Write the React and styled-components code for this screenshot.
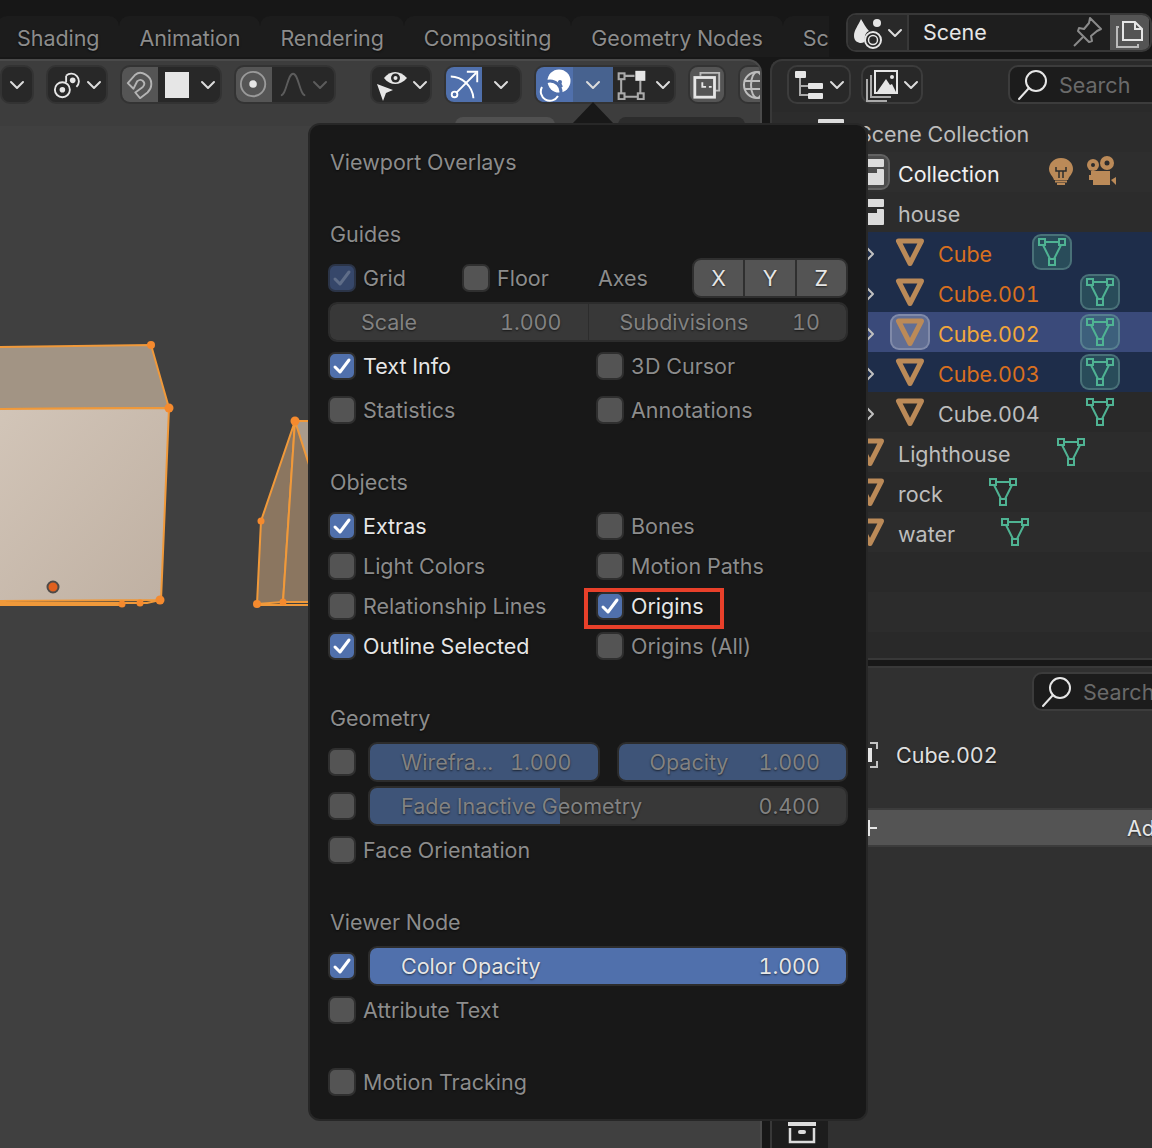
import React from "react";
import styled, { createGlobalStyle, css } from "styled-components";

const Global = createGlobalStyle`
  html, body { margin: 0; padding: 0; background: #171717; }
  * { box-sizing: border-box; }
`;

const Page = styled.div`
  position: relative;
  width: 1152px;
  height: 1148px;
  overflow: hidden;
  background: #171717;
  font-family: Inter, "Noto Sans", sans-serif;
  font-size: 21.5px;
  font-variant-numeric: tabular-nums;
  line-height: 26px;
  color: #e6e6e6;
  display: flex;
  flex-direction: column;
`;

/* ---------- top bar ---------- */
const TopBar = styled.header`
  height: 59px;
  flex: none;
  display: flex;
  overflow: hidden;
`;
const Tabs = styled.nav`
  width: 829px;
  flex: none;
  display: flex;
  padding: 16px 0 2px;
  overflow: hidden;
`;
const Tab = styled.div`
  flex: none;
  padding: 9px 20px 0;
  margin-left: ${(p) => p.$first ? "-3px" : "0"};
  background: #1c1c1c;
  border-radius: 10px 10px 0 0;
  color: #8c8c8c;
  letter-spacing: -0.06px;
  text-shadow: 0 1px 2px rgba(0,0,0,.6);
`;
const SceneSelect = styled.div`
  margin: 13px 0 7px 17px;
  width: 320px;
  display: flex;
  border: 2px solid #383838;
  border-radius: 10px;
  background: #1e1e1e;
  overflow: hidden;
`;
const SceneIcon = styled.div`
  width: 61px;
  background: #292929;
  border-right: 2px solid #383838;
  display: flex;
  align-items: center;
  justify-content: center;
  gap: 0;
`;
const SceneName = styled.div`
  width: 201px;
  padding: 0 6px 1px 14px;
  display: flex;
  align-items: center;
  justify-content: space-between;
`;
const SceneCopy = styled.div`
  width: 39px;
  background: #545454;
  display: flex;
  align-items: center;
  justify-content: center;
`;

/* ---------- body ---------- */
const Body = styled.div`
  flex: 1;
  min-height: 0;
  display: flex;
  gap: 8px;
`;
const Viewport = styled.section`
  width: 762px;
  flex: none;
  display: flex;
  flex-direction: column;
  background: #3d3d3d;
  border-top: 2px solid #4a4a4a;
  border-right: 2px solid #4a4a4a;
  border-radius: 0 14px 0 0;
  overflow: hidden;
`;
const Toolbar = styled.div`
  flex: none;
  height: 53px;
  display: flex;
  gap: 12px;
  padding-top: 4px;
  align-items: flex-start;
`;
const ToolGroup = styled.div`
  flex: none;
  height: 39px;
  display: flex;
  background: #282828;
  border: 2px solid #333;
  border-radius: 10px;
  overflow: hidden;
  margin-left: ${(p) => p.$before || 0}px;
`;
const toneColors = { active: "#5070ac", dim: "#47628f", grey: "#555555", none: "transparent" };
const Seg = styled.div`
  flex: none;
  width: ${(p) => p.$w}px;
  height: 100%;
  display: flex;
  align-items: center;
  justify-content: center;
  gap: ${(p) => p.$gap ?? 3}px;
  padding-left: ${(p) => p.$pl || 0}px;
  background: ${(p) => toneColors[p.$tone || "none"]};
`;
const ToolStrip = styled.div`
  flex: none;
  height: 12px;
  display: flex;
  align-items: flex-start;
  padding: 3px 0 0 455px;
`;
const Sliver = styled.div`
  width: ${(p) => p.$w}px;
  height: 9px;
  margin-right: ${(p) => p.$mr || 0}px;
  border-radius: 8px 8px 0 0;
  background: ${(p) => p.$bg};
`;
const Canvas = styled.div`
  flex: 1;
  min-height: 0;
  background: #404040;
  svg { display: block; }
`;

/* ---------- right side ---------- */
const Side = styled.aside`
  flex: 1;
  min-width: 0;
  display: flex;
  flex-direction: column;
`;
const Outliner = styled.section`
  height: 599px;
  flex: none;
  background: #2a2a2a;
  border-radius: 12px 0 0 0;
  border-top: 2px solid #383838;
  border-left: 2px solid #383838;
  display: flex;
  flex-direction: column;
  overflow: hidden;
`;
const OutlinerHead = styled.div`
  flex: none;
  height: 51px;
  display: flex;
  align-items: flex-start;
  gap: 10px;
  padding: 4px 0 0 15px;
`;
const HeadButton = styled.div`
  flex: none;
  width: ${(p) => p.$w}px;
  height: 39px;
  border: 2px solid #3c3c3c;
  border-radius: 10px;
  background: #282828;
  display: flex;
  align-items: center;
  justify-content: center;
  gap: 3px;
`;
const SearchBox = styled.div`
  flex: none;
  width: ${(p) => p.$w}px;
  height: 39px;
  margin-left: ${(p) => p.$before || 0}px;
  border: 2px solid #3c3c3c;
  border-radius: 10px;
  background: #1c1c1c;
  color: #6a6a6a;
  display: flex;
  align-items: center;
  gap: 10px;
  padding-left: 7px;
  overflow: hidden;
`;
const Rows = styled.div`
  flex: 1;
  min-height: 0;
  overflow: hidden;
`;
const rowBg = { selected: "#1e2d4a", active: "#3a4a7a", current: "#2e2e2e" };
const Row = styled.div`
  height: 40px;
  display: flex;
  align-items: center;
  padding-left: ${(p) => p.$indent}px;
  background: ${(p) => rowBg[p.$state] || (p.$odd ? "#2c2c2c" : "#292929")};
`;
const Chevron = styled.div`
  flex: none;
  width: 40px;
  height: 40px;
  padding-top: 4px;
  display: flex;
  align-items: center;
  justify-content: center;
`;
const IconBox = styled.div`
  flex: none;
  width: 40px;
  height: 36px;
  display: flex;
  align-items: center;
  justify-content: center;
  border-radius: 9px;
  border: 2px solid transparent;
  margin-left: ${(p) => p.$before || 0}px;
  ${(p) => p.$box === "object" && css`
    background: rgba(255,255,255,.2);
    border-color: rgba(255,255,255,.2);
  `}
  ${(p) => p.$box === "mesh" && css`
    background: rgba(70,150,130,.3);
    border-color: rgba(150,200,190,.3);
  `}
  ${(p) => p.$box === "collection" && css`
    background: #4c4c4c;
    border-color: #626262;
  `}
`;
const nameColors = { selected: "#d9701f", active: "#f2a73c", current: "#f0f0f0" };
const RowName = styled.span`
  margin-left: 8px;
  padding-top: 4px;
  color: ${(p) => nameColors[p.$state] || "#bdbdbd"};
  white-space: nowrap;
`;
const Divider = styled.div`
  flex: none;
  height: 10px;
  background: #171717;
  border-top: 2px solid #383838;
  border-bottom: 2px solid #383838;
`;
const Props = styled.section`
  flex: 1;
  min-height: 0;
  display: flex;
  background: #303030;
  border-left: 2px solid #383838;
`;
const PropTabs = styled.div`
  flex: none;
  width: 56px;
  background: #1d1d1d;
  display: flex;
  flex-direction: column;
  justify-content: flex-end;
  align-items: center;
  padding: 0 0 4px 4px;
`;
const PropMain = styled.div`
  flex: 1;
  min-width: 0;
  display: flex;
  flex-direction: column;
  overflow: hidden;
`;
const PropSearchRow = styled.div`
  flex: none;
  padding: 4px 0 0 204px;
  display: flex;
`;
const PropObject = styled.div`
  flex: none;
  height: 40px;
  margin-top: 24px;
  padding-left: 22px;
  display: flex;
  align-items: center;
  gap: 18px;
  color: #e0e0e0;
  text-shadow: 0 1px 2px rgba(0,0,0,.6);
`;
const AddButton = styled.div`
  flex: none;
  margin: 33px 0 0 10px;
  width: 700px;
  height: 39px;
  background: #545454;
  border: 2px solid #3c3c3c;
  border-radius: 8px;
  display: flex;
  align-items: center;
  padding-left: 20px;
  gap: 249px;
  text-shadow: 0 1px 2px rgba(0,0,0,.6);
`;

/* ---------- popover ---------- */
const Popover = styled.div`
  position: absolute;
  left: 308px;
  top: 123px;
  width: 560px;
  height: 998px;
  padding: 17px 18px 0;
  background: #181818;
  border: 2px solid #272727;
  border-radius: 12px;
  display: flex;
  flex-direction: column;
  gap: 32px;
  &::before {
    content: "";
    position: absolute;
    left: 263px;
    top: -23px;
    width: 0;
    height: 0;
    border-left: 20px solid transparent;
    border-right: 20px solid transparent;
    border-bottom: 21px solid #181818;
  }
`;
const Section = styled.div`
  display: flex;
  flex-direction: column;
  gap: ${(p) => p.$gap ?? 4}px;
`;
const Heading = styled.div`
  height: 40px;
  display: flex;
  align-items: center;
  padding-left: 2px;
  color: #8c8c8c;
  text-shadow: 0 1px 2px rgba(0,0,0,.6);
`;
const TwoCols = styled.div`
  display: grid;
  grid-template-columns: 268px 1fr;
  column-gap: 0;
  row-gap: ${(p) => p.$gap ?? 4}px;
`;
const GridRow = styled.div`
  display: grid;
  grid-template-columns: 134px 134px 96px 1fr;
  align-items: center;
`;
const CheckRow = styled.div`
  position: relative;
  height: 40px;
  display: flex;
  align-items: center;
  gap: 7px;
`;
const Box = styled.div`
  flex: none;
  width: 28px;
  height: 28px;
  border: 2px solid ${(p) => p.$disabled ? "#2b3447" : "#2f2f2f"};
  border-radius: 7px;
  background: ${(p) => p.$disabled ? "#36476a" : p.$on ? "#5070ac" : "#545454"};
  display: flex;
  align-items: center;
  justify-content: center;
`;
const CheckLabel = styled.span`
  color: ${(p) => p.$on ? "#e6e6e6" : "#8c8c8c"};
  text-shadow: 0 1px 2px rgba(0,0,0,.6);
  white-space: nowrap;
`;
const Callout = styled.div`
  position: absolute;
  left: -12px;
  top: 2px;
  width: 140px;
  height: 41px;
  border: 4px solid #e8402a;
  pointer-events: none;
`;
const AxisLabel = styled.span`
  padding-left: 2px;
  color: #8c8c8c;
  text-shadow: 0 1px 2px rgba(0,0,0,.6);
`;
const AxisGroup = styled.div`
  height: 40px;
  display: flex;
  border: 2px solid #2f2f2f;
  border-radius: 9px;
  overflow: hidden;
  gap: 2px;
  background: #2f2f2f;
`;
const AxisBtn = styled.div`
  flex: 1;
  background: #545454;
  display: flex;
  align-items: center;
  justify-content: center;
  color: #e6e6e6;
  text-shadow: 0 1px 2px rgba(0,0,0,.6);
`;
const FieldPair = styled.div`
  display: flex;
  height: 40px;
  border: 2px solid #2c2c2c;
  border-radius: 9px;
  overflow: hidden;
`;
const Field = styled.div`
  flex: 1;
  min-width: 0;
  height: ${(p) => p.$alone ? "40px" : "100%"};
  display: flex;
  align-items: center;
  justify-content: space-between;
  padding: 0 26px 0 31px;
  border-left: ${(p) => p.$joined ? "1px solid #2c2c2c" : "none"};
  color: ${(p) => p.$on ? "#e6e6e6" : "#828282"};
  text-shadow: 0 1px 2px rgba(0,0,0,.6);
  white-space: nowrap;
  background: linear-gradient(
    to right,
    ${(p) => p.$color || "#383838"} ${(p) => p.$fill ?? 0}%,
    #383838 ${(p) => p.$fill ?? 0}%
  );
  ${(p) => p.$alone && css`
    border: 2px solid #2c2c2c;
    border-radius: 9px;
  `}
`;
const SliderRow = styled.div`
  display: flex;
  align-items: center;
  gap: 12px;
`;
const SliderPair = styled.div`
  flex: 1;
  min-width: 0;
  display: flex;
  gap: 17px;
`;

/* ---------- icons ---------- */
const Ico = ({ s = 32, vb = 32, children, ...rest }) => (
  <svg width={s} height={s} viewBox={`0 0 ${vb} ${vb}`} fill="none" aria-hidden="true" {...rest}>{children}</svg>
);
const Down = ({ c = "#dcdcdc" }) => (
  <Ico s={16} vb={16}><path d="M2 5l6 6 6-6" stroke={c} strokeWidth="2" strokeLinecap="round" strokeLinejoin="round" /></Ico>
);
const Right = () => (
  <Ico s={16} vb={16}><path d="M5 2l6 6-6 6" stroke="#c0c0c0" strokeWidth="2" strokeLinecap="round" strokeLinejoin="round" /></Ico>
);
const PivotIcon = () => (
  <Ico s={30}><g stroke="#e6e6e6" strokeWidth="2"><circle cx="10" cy="21" r="8" /><path d="M14 6a8 8 0 1 1 11 12" /><path d="M14 13c0-3 0-5 0-7" /></g><circle cx="10" cy="21" r="3" fill="#e6e6e6" /><circle cx="21" cy="11" r="3" fill="#e6e6e6" /></Ico>
);
const MagnetIcon = () => (
  <Ico s={30}><path d="M3 14 L11 5 C17 0 29 6 28 16 C28 20 26 22 24 24 L16 30 L11 24 L19 18 C23 14 18 8 13 12 L9 20 Z" stroke="#b4b4b4" strokeWidth="2" strokeLinejoin="round" /></Ico>
);
const Swatch = styled.div`
  width: 24px;
  height: 26px;
  background: #e6e6e6;
`;
const ProportionalIcon = () => (
  <Ico s={30}><circle cx="15" cy="15" r="13" stroke="#9a9a9a" strokeWidth="2" /><circle cx="15" cy="15" r="4" fill="#e6e6e6" /></Ico>
);
const FalloffIcon = () => (
  <Ico s={30}><path d="M2 27C8 27 9 4 15 4s7 23 13 23" stroke="#5c5c5c" strokeWidth="2" /></Ico>
);
const EyeArrowIcon = () => (
  <Ico s={34} vb={34}><path d="M9 10C15 2 25 2 32 10 25 18 15 18 9 10Z" fill="#e6e6e6" /><circle cx="20.500" cy="10" r="4.500" fill="#282828" /><circle cx="20.500" cy="10" r="2" fill="#e6e6e6" /><path d="M2 16l16 6-7 3-3 8Z" fill="#e6e6e6" /></Ico>
);
const TransformIcon = () => (
  <Ico s={34} vb={36}><g stroke="#fff" strokeWidth="2"><path d="M4 9C16 9 27 19 28 32" /><path d="M10 26 31 5" /><path d="M21 4H32V15" /><circle cx="8" cy="28" r="3" /></g></Ico>
);
const OverlayIcon = () => (
  <Ico s={36} vb={36}><circle cx="22" cy="14" r="11.500" fill="#fff" /><circle cx="13" cy="25" r="11" stroke="#5070ac" strokeWidth="3" /><path d="M5 20a9 9 0 1 0 16 9" stroke="#fff" strokeWidth="2" /><path d="M22 14l3 6" stroke="#5070ac" strokeWidth="2" /><circle cx="23" cy="15" r="2" fill="#5070ac" /></Ico>
);
const MeshSelectIcon = () => (
  <Ico s={30} vb={36}><g stroke="#aaa" strokeWidth="2.500"><rect x="2" y="4" width="7" height="7" /><rect x="2" y="28" width="7" height="7" /><rect x="25" y="28" width="7" height="7" /><path d="M9 7H21M5 11V28M9 32H25M28 13V28" /></g><rect x="22" y="1" width="12" height="12" fill="#e6e6e6" /></Ico>
);
const XrayIcon = () => (
  <Ico s={30} vb={32}><path d="M9 6V3H29V22H25" stroke="#bbb" strokeWidth="2" /><rect x="3" y="8" width="21" height="21" stroke="#e6e6e6" strokeWidth="3" /><path d="M11 13v5h4M18 18h3" stroke="#e6e6e6" strokeWidth="2" /></Ico>
);
const GlobeIcon = () => (
  <Ico s={32} vb={32}><g stroke="#bdbdbd" strokeWidth="2"><circle cx="16" cy="16" r="13" /><ellipse cx="16" cy="16" rx="6" ry="13" /><path d="M3 12H29M3 20H29" /></g></Ico>
);
const TreeIcon = () => (
  <Ico s={32} vb={32}><path d="M6 8V26H14M6 17H14" stroke="#aaa" strokeWidth="2" /><rect x="1" y="2" width="11" height="7" rx="1" fill="#e6e6e6" /><rect x="14" y="14" width="15" height="6" rx="1" fill="#e6e6e6" /><rect x="14" y="24" width="15" height="6" rx="1" fill="#e6e6e6" /></Ico>
);
const ImagesIcon = () => (
  <Ico s={34} vb={34}><path d="M9 3v22h22V3Z" stroke="#e6e6e6" strokeWidth="2" /><path d="M5 7v22h20M1 11v22h20" stroke="#aaa" strokeWidth="2" /><path d="M11 24l9-13 4 6 2-1 4 8Z" fill="#e6e6e6" /><circle cx="26" cy="9" r="2" fill="#e6e6e6" /></Ico>
);
const SearchIcon = ({ c = "#e6e6e6" }) => (
  <Ico s={32} vb={32}><circle cx="19" cy="12" r="10" stroke={c} strokeWidth="2" /><path d="M12 19 2 30" stroke={c} strokeWidth="2" strokeLinecap="round" /></Ico>
);
const SceneDropIcon = () => (
  <Ico s={34} vb={34}><path d="M8 3C5 10 1 14 1 20c0 5 4 7 7 7 2 0 3-1 4-2-1-5 1-9 4-10C13 12 11 8 8 3Z" fill="#e6e6e6" /><circle cx="24" cy="7" r="4" fill="#e6e6e6" /><circle cx="20" cy="24" r="8" stroke="#e6e6e6" strokeWidth="2" /><circle cx="20" cy="24" r="4.500" stroke="#e6e6e6" strokeWidth="1.500" /></Ico>
);
const PinIcon = () => (
  <Ico s={32} vb={32}><path d="M18 2 29 13l-4 2-6 5 1 5-3 1-11-11 1-3 5 1 5-6Z" stroke="#8a8a8a" strokeWidth="2" strokeLinejoin="round" /><path d="M11 21 2 30" stroke="#8a8a8a" strokeWidth="2" /></Ico>
);
const CopyIcon = () => (
  <Ico s={32} vb={32}><path d="M9 5H21L28 12V23H9Z" stroke="#e6e6e6" strokeWidth="2" /><path d="M21 5V12H28" stroke="#e6e6e6" strokeWidth="2" /><path d="M5 10H3V30H24V27" stroke="#bbb" strokeWidth="2" /></Ico>
);
const CollectionIcon = ({ notch = "#2a2a2a" }) => (
  <Ico s={28} vb={28}><rect x="2" y="1" width="26" height="8" rx="1" fill="#dcdcdc" /><rect x="4" y="11" width="24" height="16" rx="1" fill="#dcdcdc" /><rect x="4" y="11" width="17" height="4" fill={notch} /></Ico>
);
const ObjectIcon = () => (
  <Ico s={30} vb={30}><path d="M3.500 4H26.500L15 26.500Z" stroke="#bb8a58" strokeWidth="5" strokeLinejoin="round" /></Ico>
);
const MeshIcon = () => (
  <Ico s={28} vb={28}><g stroke="#4fb393" strokeWidth="2"><rect x="1" y="1" width="6" height="6" /><rect x="21" y="1" width="6" height="6" /><rect x="11" y="21" width="6" height="6" /><path d="M7 4H21M5 7 12 21M23 7 16 21" /></g></Ico>
);
const BulbIcon = () => (
  <Ico s={28} vb={28}><path d="M14 0C6 0 2 6 2 11c0 5 4 7 5 11h14c1-4 5-6 5-11 0-5-4-11-12-11Z" fill="#bb8a58" /><path d="M9 9v4h10V9M12 13v7M16 13v7" stroke="#2c2c2c" strokeWidth="1.500" /><path d="M8 23.500H20M10 26H18" stroke="#bb8a58" strokeWidth="2" /></Ico>
);
const CameraIcon = () => (
  <Ico s={32} vb={32}><circle cx="8" cy="9" r="6" fill="#bb8a58" /><circle cx="22" cy="7" r="7" fill="#bb8a58" /><circle cx="8" cy="9" r="2" fill="#2c2c2c" /><circle cx="22" cy="7" r="2.500" fill="#2c2c2c" /><path d="M6 15H25V29H8V24H4V19H6Z" fill="#bb8a58" /><path d="M26 24l5-3v8Z" fill="#bb8a58" /></Ico>
);
const ObjectDataIcon = () => (
  <Ico s={28} vb={28}><path d="M20 2h7v6M27 20v6h-7" stroke="#c4c4c4" strokeWidth="2" /><rect x="4" y="7" width="18" height="14" fill="#e6e6e6" /></Ico>
);
const PlusIcon = () => (
  <Ico s={18} vb={18}><path d="M9 1V17M1 9H17" stroke="#e6e6e6" strokeWidth="2" /></Ico>
);
const ArchiveIcon = () => (
  <Ico s={30} vb={30}><path d="M1 10H29" stroke="#dcdcdc" strokeWidth="4" /><path d="M3 14V28H27V14" stroke="#dcdcdc" strokeWidth="2.500" /><rect x="11" y="16" width="8" height="4" rx="2" fill="#dcdcdc" /></Ico>
);
const Tick = ({ dim }) => (
  <Ico s={20} vb={20}><path d="M3 11l5 5L17 4" stroke={dim ? "#5f6d88" : "#fff"} strokeWidth="3" strokeLinecap="round" strokeLinejoin="round" /></Ico>
);

const Scene = () => (
  <svg width="760" height="1022" viewBox="0 126 760 1022" aria-hidden="true">
    <defs>
      <linearGradient id="front" x1="0" y1="0" x2="1" y2="1">
        <stop offset="0" stopColor="#d2c5b8" />
        <stop offset="1" stopColor="#bfb0a2" />
      </linearGradient>
    </defs>
    <polygon points="-2,347 151,345 169,408 -2,409" fill="#a29484" stroke="#f0993a" strokeWidth="2" />
    <polygon points="-2,409 169,408 161,600 -2,601" fill="url(#front)" stroke="#f0993a" strokeWidth="2" />
    <path d="M0 603H147L160 600M0 605H122" stroke="#f0993a" strokeWidth="2" fill="none" />
    <g fill="#f58a2e">
      <circle cx="151" cy="345" r="4" />
      <circle cx="169" cy="408" r="4.500" />
      <circle cx="160" cy="600" r="4.500" />
      <circle cx="122" cy="604" r="3.500" />
      <circle cx="140" cy="603" r="3.500" />
    </g>
    <circle cx="53" cy="587" r="5.500" fill="#e0601f" stroke="#4e4a48" strokeWidth="2" />
    <polygon points="295,421 310,421 310,470" fill="#a89b8d" />
    <polygon points="295,421 261,521 257,604 283,602" fill="#8b7660" stroke="#f0993a" strokeWidth="2" />
    <polygon points="295,421 310,468 310,602 283,602" fill="#8b7660" stroke="#f0993a" strokeWidth="2" />
    <path d="M295 421H310" stroke="#f0993a" strokeWidth="2" />
    <path d="M257 605H310" stroke="#f0993a" strokeWidth="2" />
    <g fill="#f58a2e">
      <circle cx="295" cy="421" r="4.500" />
      <circle cx="261" cy="521" r="3.500" />
      <circle cx="257" cy="604" r="4" />
      <circle cx="283" cy="602" r="3.500" />
    </g>
  </svg>
);

const tabs = ["Shading", "Animation", "Rendering", "Compositing", "Geometry Nodes", "Sc"];

const objectRows = [
  { name: "Cube", state: "selected", box: true },
  { name: "Cube.001", state: "selected", box: true },
  { name: "Cube.002", state: "active", box: true },
  { name: "Cube.003", state: "selected", box: true },
  { name: "Cube.004" },
];
const plainRows = ["Lighthouse", "rock", "water"];

const Check = ({ label, on, disabled, children }) => (
  <CheckRow>
    <Box $on={on} $disabled={disabled}>{(on || disabled) && <Tick dim={disabled} />}</Box>
    {label && <CheckLabel $on={on}>{label}</CheckLabel>}
    {children}
  </CheckRow>
);

export default function App() {
  return (
    <Page>
      <Global />
      <TopBar>
        <Tabs>
          {tabs.map((t, i) => <Tab key={t} $first={i === 0}>{t}</Tab>)}
        </Tabs>
        <SceneSelect>
          <SceneIcon><SceneDropIcon /><Down /></SceneIcon>
          <SceneName>Scene<PinIcon /></SceneName>
          <SceneCopy><CopyIcon /></SceneCopy>
        </SceneSelect>
      </TopBar>

      <Body>
        <Viewport>
          <Toolbar>
            <ToolGroup><Seg $w={30}><Down /></Seg></ToolGroup>
            <ToolGroup><Seg $w={58}><PivotIcon /><Down /></Seg></ToolGroup>
            <ToolGroup>
              <Seg $w={36} $tone="grey"><MagnetIcon /></Seg>
              <Seg $w={62} $gap={11} $pl={3}><Swatch /><Down /></Seg>
            </ToolGroup>
            <ToolGroup>
              <Seg $w={36} $tone="grey"><ProportionalIcon /></Seg>
              <Seg $w={62}><FalloffIcon /><Down c="#5c5c5c" /></Seg>
            </ToolGroup>
            <ToolGroup $before={22}><Seg $w={58}><EyeArrowIcon /><Down /></Seg></ToolGroup>
            <ToolGroup>
              <Seg $w={36} $tone="active"><TransformIcon /></Seg>
              <Seg $w={38}><Down /></Seg>
            </ToolGroup>
            <ToolGroup>
              <Seg $w={37} $tone="active"><OverlayIcon /></Seg>
              <Seg $w={40} $tone="dim"><Down /></Seg>
              <Seg $w={61} $gap={8}><MeshSelectIcon /><Down /></Seg>
            </ToolGroup>
            <ToolGroup><Seg $w={34} $tone="grey"><XrayIcon /></Seg></ToolGroup>
            <ToolGroup><Seg $w={34} $tone="grey"><GlobeIcon /></Seg></ToolGroup>
          </Toolbar>
          <ToolStrip>
            <Sliver $w={100} $bg="#505050" $mr={63} />
            <Sliver $w={127} $bg="#2c2c2c" />
          </ToolStrip>
          <Canvas><Scene /></Canvas>
        </Viewport>

        <Side>
          <Outliner>
            <OutlinerHead>
              <HeadButton $w={64}><TreeIcon /><Down /></HeadButton>
              <HeadButton $w={62}><ImagesIcon /><Down /></HeadButton>
              <SearchBox $w={160} $before={75}><SearchIcon />Search</SearchBox>
            </OutlinerHead>
            <Rows>
              <Row $indent={38} $odd>
                <IconBox><CollectionIcon /></IconBox>
                <RowName>Scene Collection</RowName>
              </Row>
              <Row $indent={78} $state="current">
                <IconBox $box="collection"><CollectionIcon notch="#4c4c4c" /></IconBox>
                <RowName $state="current">Collection</RowName>
                <IconBox $before={41}><BulbIcon /></IconBox>
                <IconBox><CameraIcon /></IconBox>
              </Row>
              <Row $indent={78} $odd>
                <IconBox><CollectionIcon notch="#2c2c2c" /></IconBox>
                <RowName>house</RowName>
              </Row>
              {objectRows.map((r) => (
                <Row key={r.name} $indent={78} $state={r.state}>
                  <Chevron><Right /></Chevron>
                  <IconBox $box={r.state === "active" ? "object" : undefined}><ObjectIcon /></IconBox>
                  <RowName $state={r.state}>{r.name}</RowName>
                  <IconBox $before={40} $box={r.box ? "mesh" : undefined}><MeshIcon /></IconBox>
                </Row>
              ))}
              {plainRows.map((name, i) => (
                <Row key={name} $indent={78} $odd={i !== 1}>
                  <IconBox><ObjectIcon /></IconBox>
                  <RowName>{name}</RowName>
                  <IconBox $before={40}><MeshIcon /></IconBox>
                </Row>
              ))}
              <Row $indent={0} />
              <Row $indent={0} $odd />
              <Row $indent={0} />
            </Rows>
          </Outliner>
          <Divider />
          <Props>
            <PropTabs><ArchiveIcon /></PropTabs>
            <PropMain>
              <PropSearchRow>
                <SearchBox $w={160}><SearchIcon />Search</SearchBox>
              </PropSearchRow>
              <PropObject><ObjectDataIcon />Cube.002</PropObject>
              <AddButton><PlusIcon />Ad</AddButton>
            </PropMain>
          </Props>
        </Side>
      </Body>

      <Popover>
        <Heading>Viewport Overlays</Heading>
        <Section>
          <Heading>Guides</Heading>
          <GridRow>
            <Check label="Grid" disabled />
            <Check label="Floor" />
            <AxisLabel>Axes</AxisLabel>
            <AxisGroup>
              <AxisBtn>X</AxisBtn>
              <AxisBtn>Y</AxisBtn>
              <AxisBtn>Z</AxisBtn>
            </AxisGroup>
          </GridRow>
          <FieldPair>
            <Field><span>Scale</span><span>1.000</span></Field>
            <Field $joined><span>Subdivisions</span><span>10</span></Field>
          </FieldPair>
          <TwoCols>
            <Check label="Text Info" on />
            <Check label="3D Cursor" />
            <Check label="Statistics" />
            <Check label="Annotations" />
          </TwoCols>
        </Section>
        <Section>
          <Heading>Objects</Heading>
          <TwoCols $gap={0}>
            <Check label="Extras" on />
            <Check label="Bones" />
            <Check label="Light Colors" />
            <Check label="Motion Paths" />
            <Check label="Relationship Lines" />
            <Check label="Origins" on><Callout /></Check>
            <Check label="Outline Selected" on />
            <Check label="Origins (All)" />
          </TwoCols>
        </Section>
        <Section>
          <Heading>Geometry</Heading>
          <SliderRow>
            <Check />
            <SliderPair>
              <Field $alone $fill={100} $color="#3e5478"><span>Wirefra...</span><span>1.000</span></Field>
              <Field $alone $fill={100} $color="#3e5478"><span>Opacity</span><span>1.000</span></Field>
            </SliderPair>
          </SliderRow>
          <SliderRow>
            <Check />
            <Field $alone $fill={40} $color="#3e5478"><span>Fade Inactive Geometry</span><span>0.400</span></Field>
          </SliderRow>
          <Check label="Face Orientation" />
        </Section>
        <Section>
          <Heading>Viewer Node</Heading>
          <SliderRow>
            <Check on />
            <Field $alone $on $fill={100} $color="#5070ac"><span>Color Opacity</span><span>1.000</span></Field>
          </SliderRow>
          <Check label="Attribute Text" />
        </Section>
        <Section>
          <Check label="Motion Tracking" />
        </Section>
      </Popover>
    </Page>
  );
}
